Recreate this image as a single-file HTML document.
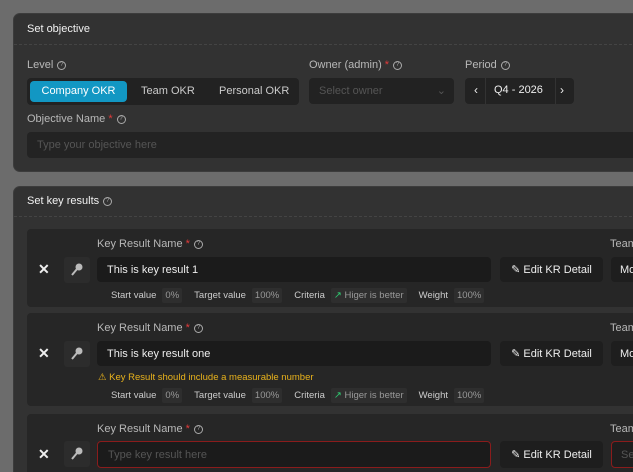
<!DOCTYPE html>
<html><head><style>
*{box-sizing:border-box;margin:0;padding:0}
html,body{width:633px;height:472px;overflow:hidden}
body{background:#6c6c6c;font-family:"Liberation Sans",sans-serif;color:#ddd;font-size:11px;position:relative}
.abs{position:absolute}
.panel{position:absolute;left:13px;width:640px;background:#323232;border-radius:7px;border:1px solid #3c3c3c}
.hdr{position:absolute;left:13px;font-size:11px;color:#f2f2f2}
.dash{position:absolute;left:0;right:0;border-top:1px dashed #444}
.lbl{position:absolute;color:#b8b8b8;font-size:11px;white-space:nowrap}
.q{display:inline-block;width:9px;height:9px;border:1px solid #aaa;border-radius:50%;font-size:6px;line-height:7px;text-align:center;vertical-align:middle;margin-left:4px;color:#aaa}
.req{color:#e23a3a}
.box{position:absolute;background:#222;border-radius:4px}
.card{position:absolute;left:27px;width:620px;background:#262626;border-radius:4px}
.in{position:absolute;background:#1b1b1b;border-radius:4px;font-size:11px;padding-left:10px;display:flex;align-items:center}
.meta{position:absolute;left:111px;font-size:9.5px;color:#ccc;display:flex;align-items:center;gap:6px;white-space:nowrap}
.chip{background:#2e2e2e;padding:2px 3px;color:#999;border-radius:2px;margin-right:6px}
.x{position:absolute;left:38px;font-size:14px;color:#eee;font-weight:bold}
.key{position:absolute;left:64px;width:26px;height:26px;background:#2c2c2c;border-radius:3px}
.edit{position:absolute;left:500px;width:103px;height:25px;background:#1e1e1e;border-radius:4px;color:#eee;font-size:11px;display:flex;align-items:center;justify-content:center;gap:5px}
.team{position:absolute;left:611px;width:40px;height:25px;background:#1e1e1e;border-radius:4px;padding-left:9px;display:flex;align-items:center;color:#eee}
</style></head><body>

<div class="panel" style="top:13px;height:159px">
  <div class="hdr" style="top:9px">Set objective</div>
  <div class="dash" style="top:30px"></div>
</div>
<div class="lbl" style="left:27px;top:59px">Level<span class="q">?</span></div>
<div class="box" style="left:27px;top:78px;width:272px;height:27px"></div>
<div class="abs" style="left:30px;top:81px;width:97px;height:21px;background:#1297c3;border-radius:4px;color:#fff;text-align:center;line-height:21px">Company OKR</div>
<div class="abs" style="left:141px;top:85px;color:#ccc">Team OKR</div>
<div class="abs" style="left:219px;top:85px;color:#ccc">Personal OKR</div>
<div class="lbl" style="left:309px;top:59px">Owner (admin) <span class="req">*</span><span class="q">?</span></div>
<div class="box" style="left:309px;top:78px;width:145px;height:26px;color:#555;padding:7px 10px">Select owner<span style="position:absolute;right:8px;top:6px;color:#555">⌄</span></div>
<div class="lbl" style="left:465px;top:59px">Period<span class="q">?</span></div>
<div class="box" style="left:465px;top:78px;width:109px;height:26px"></div>
<div class="abs" style="left:474px;top:83px;color:#eee;font-size:12px">‹</div>
<div class="abs" style="left:485px;top:78px;width:1px;height:26px;background:#333"></div>
<div class="abs" style="left:494px;top:84px;color:#eee">Q4 - 2026</div>
<div class="abs" style="left:555px;top:78px;width:1px;height:26px;background:#333"></div>
<div class="abs" style="left:560px;top:83px;color:#eee;font-size:12px">›</div>
<div class="lbl" style="left:27px;top:113px">Objective Name <span class="req">*</span><span class="q">?</span></div>
<div class="in" style="left:27px;top:132px;width:620px;height:26px;color:#555;background:#232323">Type your objective here</div>

<div class="panel" style="top:186px;height:300px">
  <div class="hdr" style="top:8px">Set key results<span class="q">?</span></div>
  <div class="dash" style="top:29px"></div>
</div>

<div class="card" style="top:229px;height:78px"></div>
<div class="lbl" style="left:97px;top:238px">Key Result Name <span class="req">*</span><span class="q">?</span></div>
<div class="lbl" style="left:610px;top:238px">Team</div>
<div class="x" style="top:261px">✕</div>
<div class="key" style="top:257px"><svg width="26" height="26" viewBox="0 0 26 26"><circle cx="15" cy="10" r="3.5" fill="#bbb"/><path d="M13 12 L8 18" stroke="#bbb" stroke-width="2"/></svg></div>
<div class="in" style="left:97px;top:257px;width:394px;height:25px;color:#eee">This is key result 1</div>
<div class="edit" style="top:257px">✎ Edit KR Detail</div>
<div class="team" style="top:257px">Mo</div>
<div class="meta" style="top:288px">Start value<span class="chip">0%</span>Target value<span class="chip">100%</span>Criteria<span class="chip"><span style="color:#2ecc71">↗</span> Higer is better</span>Weight<span class="chip">100%</span></div>

<div class="card" style="top:313px;height:93px"></div>
<div class="lbl" style="left:97px;top:322px">Key Result Name <span class="req">*</span><span class="q">?</span></div>
<div class="lbl" style="left:610px;top:322px">Team</div>
<div class="x" style="top:345px">✕</div>
<div class="key" style="top:341px"><svg width="26" height="26" viewBox="0 0 26 26"><circle cx="15" cy="10" r="3.5" fill="#bbb"/><path d="M13 12 L8 18" stroke="#bbb" stroke-width="2"/></svg></div>
<div class="in" style="left:97px;top:341px;width:394px;height:25px;color:#eee">This is key result one</div>
<div class="edit" style="top:341px">✎ Edit KR Detail</div>
<div class="team" style="top:341px">Mo</div>
<div class="abs" style="left:98px;top:372px;font-size:9.5px;color:#e8b21c">⚠ Key Result should include a measurable number</div>
<div class="meta" style="top:388px">Start value<span class="chip">0%</span>Target value<span class="chip">100%</span>Criteria<span class="chip"><span style="color:#2ecc71">↗</span> Higer is better</span>Weight<span class="chip">100%</span></div>

<div class="card" style="top:414px;height:80px"></div>
<div class="lbl" style="left:97px;top:423px">Key Result Name <span class="req">*</span><span class="q">?</span></div>
<div class="lbl" style="left:610px;top:423px">Team</div>
<div class="x" style="top:446px">✕</div>
<div class="key" style="top:441px"><svg width="26" height="26" viewBox="0 0 26 26"><circle cx="15" cy="10" r="3.5" fill="#bbb"/><path d="M13 12 L8 18" stroke="#bbb" stroke-width="2"/></svg></div>
<div class="in" style="left:97px;top:441px;width:394px;height:27px;color:#555;border:1px solid #8a1c1c">Type key result here</div>
<div class="edit" style="top:441px;height:27px">✎ Edit KR Detail</div>
<div class="team" style="top:441px;height:27px;border:1px solid #8a1c1c;color:#555">Se</div>
</body></html>
